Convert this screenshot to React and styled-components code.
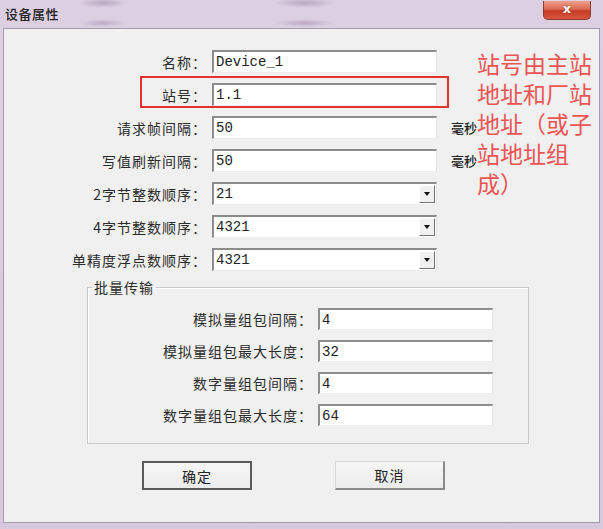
import React from 'react';
import styled, { createGlobalStyle } from 'styled-components';

const GlobalStyle = createGlobalStyle`
  html, body {
    margin: 0;
    padding: 0;
    background: #d8cbdf;
  }
  body {
    font-family: "Noto Sans CJK SC", "Liberation Sans", sans-serif;
  }
`;

const Window = styled.div`
  width: 603px;
  height: 529px;
  display: flex;
  flex-direction: column;
  background: linear-gradient(180deg, #dccfe2 0%, #d6c9dd 100%);
  overflow: hidden;
`;

const TitleBar = styled.div`
  height: 28px;
  display: flex;
  align-items: flex-start;
  padding-left: 5px;
  background:
    radial-gradient(ellipse 24px 5px at 103px 3px, rgba(140, 115, 150, 0.45), transparent),
    radial-gradient(ellipse 22px 4px at 103px 23px, rgba(140, 115, 150, 0.4), transparent),
    radial-gradient(ellipse 30px 5px at 305px 3px, rgba(140, 115, 150, 0.45), transparent),
    radial-gradient(ellipse 30px 4px at 305px 23px, rgba(140, 115, 150, 0.4), transparent);
`;

const Title = styled.div`
  margin-top: 5px;
  font-size: 13px;
  line-height: 17px;
  color: #222;
  font-weight: 500;
  letter-spacing: 0.5px;
`;

const Spacer = styled.div`
  flex: 1;
`;

const CloseButton = styled.div`
  width: 46px;
  height: 18px;
  margin-right: 12px;
  margin-top: 1px;
  border: 1px solid #8c3b30;
  border-top: none;
  border-radius: 0 0 5px 5px;
  background: linear-gradient(180deg, #eea08a 0%, #dd6a52 45%, #c63a24 55%, #d8583e 100%);
  color: #fff;
  font-family: "DejaVu Sans", sans-serif;
  font-weight: bold;
  font-size: 13px;
  line-height: 16px;
  text-align: center;
  text-shadow: 0 0 2px #7a2a20;
`;

const Panel = styled.div`
  position: relative;
  flex: 1;
  margin: 0 3px 6px 3px;
  background: #f0f0f0;
  border: 1px solid #a39ca8;
  padding-top: 21px;
  display: flex;
  flex-direction: column;
`;

const Rows = styled.div`
  display: flex;
  flex-direction: column;
  gap: ${p => p.$gap}px;
`;

const Row = styled.div`
  position: relative;
  display: flex;
  align-items: center;
  height: ${p => p.$h}px;
  gap: 5px;
`;

const Label = styled.div`
  width: ${p => p.$w}px;
  text-align: right;
  font-size: 14px;
  letter-spacing: 1px;
  color: #2b2b2b;
  white-space: nowrap;
`;

const Field = styled.div`
  position: relative;
  box-sizing: border-box;
  width: ${p => p.$w}px;
  height: 100%;
  background: #fff;
  border-top: 2px solid #8c8c8c;
  border-left: 2px solid #8c8c8c;
  border-right: 1px solid #e2e2e2;
  border-bottom: 1px solid #ececec;
  display: flex;
  align-items: center;
  padding-left: 2px;
  font-family: "Liberation Mono", monospace;
  font-size: 14px;
  color: #222;
`;

const DropButton = styled.div`
  position: absolute;
  right: 1px;
  top: 1px;
  bottom: 1px;
  width: 16px;
  box-sizing: border-box;
  background: #f0f0f0;
  border-right: 1px solid #707070;
  border-bottom: 1px solid #707070;
  border-top: 1px solid #fff;
  border-left: 1px solid #fff;
  display: flex;
  align-items: center;
  justify-content: center;

  &::after {
    content: "";
    border-left: 3.5px solid transparent;
    border-right: 3.5px solid transparent;
    border-top: 4px solid #111;
  }
`;

const Unit = styled.div`
  margin-left: 9px;
  font-size: 13px;
  color: #222;
  font-weight: 500;
`;

const Highlight = styled.div`
  position: absolute;
  left: 136px;
  top: -7px;
  width: 309px;
  height: 32px;
  box-sizing: border-box;
  border: 2px solid #e2332f;
  pointer-events: none;
`;

const Note = styled.div`
  position: absolute;
  left: 473px;
  top: 19px;
  width: 120px;
  font-size: 23px;
  line-height: 30px;
  color: #ee5454;
`;

const Group = styled.fieldset`
  margin: 8px 0 0 83px;
  width: 442px;
  box-sizing: border-box;
  padding: 12px 0 17px 0;
  border: 1px solid #c9c9c9;
  box-shadow: 1px 1px 0 #fff inset;
`;

const Legend = styled.legend`
  margin-left: 4px;
  padding: 0 2px;
  font-size: 14px;
  line-height: 17px;
  letter-spacing: 1px;
  color: #2b2b2b;
`;

const Buttons = styled.div`
  display: flex;
  gap: 83px;
  margin: 17px 0 0 138px;
`;

const Button = styled.div`
  width: 110px;
  height: 29px;
  box-sizing: border-box;
  display: flex;
  align-items: center;
  justify-content: center;
  background: linear-gradient(180deg, #f6f6f6, #ececec);
  font-size: 14px;
  letter-spacing: 1px;
  color: #222;
  border: ${p => (p.$default ? '2px solid #5a5a5a' : '1px solid #d8d8d8')};
  border-right: 2px solid ${p => (p.$default ? '#5a5a5a' : '#8a8a8a')};
  border-bottom: 2px solid ${p => (p.$default ? '#5a5a5a' : '#8a8a8a')};
`;

const mainRows = [
  { label: '名称：', value: 'Device_1' },
  { label: '站号：', value: '1.1', highlight: true },
  { label: '请求帧间隔：', value: '50', unit: '毫秒' },
  { label: '写值刷新间隔：', value: '50', unit: '毫秒' },
  { label: '2字节整数顺序：', value: '21', select: true },
  { label: '4字节整数顺序：', value: '4321', select: true },
  { label: '单精度浮点数顺序：', value: '4321', select: true },
];

const batchRows = [
  { label: '模拟量组包间隔：', value: '4' },
  { label: '模拟量组包最大长度：', value: '32' },
  { label: '数字量组包间隔：', value: '4' },
  { label: '数字量组包最大长度：', value: '64' },
];

export default function App() {
  return (
    <>
      <GlobalStyle />
      <Window>
        <TitleBar>
          <Title>设备属性</Title>
          <Spacer />
          <CloseButton>x</CloseButton>
        </TitleBar>
        <Panel>
          <Rows $gap={10}>
            {mainRows.map(r => (
              <Row key={r.label} $h={23}>
                <Label $w={203}>{r.label}</Label>
                <Field $w={225}>
                  {r.value}
                  {r.select && <DropButton />}
                </Field>
                {r.unit && <Unit>{r.unit}</Unit>}
                {r.highlight && <Highlight />}
              </Row>
            ))}
          </Rows>

          <Group>
            <Legend>批量传输</Legend>
            <Rows $gap={10}>
              {batchRows.map(r => (
                <Row key={r.label} $h={22}>
                  <Label $w={225}>{r.label}</Label>
                  <Field $w={175}>{r.value}</Field>
                </Row>
              ))}
            </Rows>
          </Group>

          <Buttons>
            <Button $default>确定</Button>
            <Button>取消</Button>
          </Buttons>

          <Note>站号由主站地址和厂站地址（或子站地址组成）</Note>
        </Panel>
      </Window>
    </>
  );
}
